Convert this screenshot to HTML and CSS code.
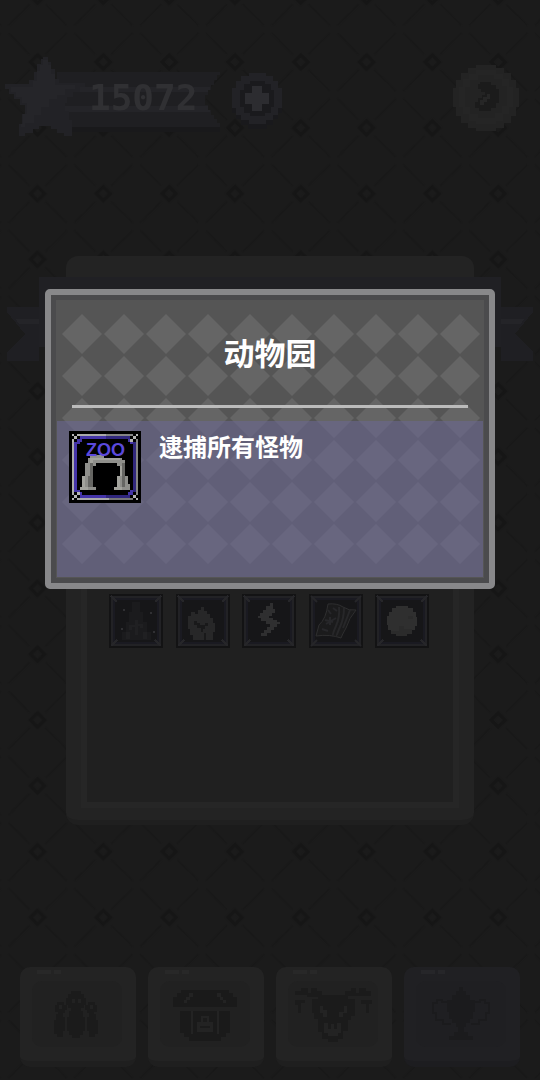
FILE: index.html
```html
<!DOCTYPE html>
<html lang="zh-CN">
<head>
  <meta charset="UTF-8">
  <meta name="viewport" content="width=device-width, initial-scale=1.0">
  <title>动物园</title>
  <link rel="stylesheet" href="styles.css">
</head>
<body>
  <svg class="wallpaper" aria-hidden="true">
    <defs>
      <pattern id="lattice" x="4.6" y="29.1" width="65.8" height="65.8" patternUnits="userSpaceOnUse">
        <path d="M4 4L25 25M41 41L62 62M62 4L41 25M25 41L4 62" stroke="#181818" stroke-width="1.5"/>
        <path d="M33 26L40 33L33 40L26 33Z" fill="none" stroke="#161616" stroke-width="3.5"/>
      </pattern>
      <!-- frame shared by all the achievement icons -->
      <symbol id="frame" viewBox="0 0 27 27">
        <path fill="#131314" d="M0 0H27V27H0Z"/>
        <path fill="none" stroke="#222225" d="M1.5 1.5H25.5V25.5H1.5Z"/>
        <path fill="none" stroke="#1a1a21" d="M2.5 2.5H24.5V24.5H2.5Z"/>
        <path fill="#161618" d="M3 3H24V24H3Z"/>
        <path stroke="#262629" d="M1 1L4 4M26 1L23 4M1 26L4 23M26 26L23 23"/>
      </symbol>
    </defs>
    <rect width="100%" height="100%" fill="url(#lattice)"/>
  </svg>

  <div class="page">
    <header class="top-bar">
      <div class="score">
        <svg class="star" viewBox="0 0 80 80" shape-rendering="crispEdges" aria-hidden="true">
          <path fill="#222226" d="M38 0H43V5H46V12H50V22H54V26H80V30H75V35H68V40H62V46H60V54H64V63H67V79H59V76H52V72H46V69H34V72H28V76H20V79H14V67H17V57H20V48H15V42H9V37H4V32H0V27H24V23H29V15H32V7H36V2H38Z"/>
          <path fill="#252529" d="M38 3H43V8H46V17H50V28H70V32H60V38H52V42H44V50H36V58H29V66H20V70H16V67H18V57H22V46H17V40H11V35H6V30H28V24H32V14H35V8H38Z"/>
        </svg>
        <div class="score-ribbon">
          <svg class="score-shape" viewBox="0 0 163 62" preserveAspectRatio="none" shape-rendering="crispEdges" aria-hidden="true">
            <path fill="#1f1f22" d="M0 0H163V3H160V8H157V13H154V18H151V23H148V33H151V38H154V43H157V47H160V51H163V55H0Z"/>
            <path fill="#242428" d="M0 15H153V18H151V20H0ZM0 34H151V38H153V40H0Z"/>
            <path fill="#19191b" d="M0 55H163V60H0Z"/>
          </svg>
          <span class="score-value">15072</span>
        </div>
      </div>
      <button class="icon-button plus" aria-label="增加">
        <svg viewBox="0 0 50 58" shape-rendering="crispEdges">
          <path fill="#19191c" d="M17 6H34V9H41V14H46V19H50V40H46V46H41V52H35V56H16V52H9V46H4V40H0V19H4V13H9V9H17Z"/>
          <path fill="#222226" d="M17 0H34V3H41V8H46V15H50V35H46V42H41V47H34V51H17V47H9V42H4V35H0V15H4V8H9V3H17Z"/>
          <path fill="#1a1a1d" d="M18 8H33V11H39V17H42V34H39V40H33V43H18V40H12V34H8V17H12V11H18Z"/>
          <path fill="#2c2c30" d="M20 13H30V20H37V31H30V38H20V31H13V20H20Z"/>
        </svg>
      </button>
      <button class="icon-button forward" aria-label="前进">
        <svg viewBox="0 0 66 66" shape-rendering="crispEdges">
          <path fill="#232323" d="M23 0H43V3H51V8H58V15H63V23H66V42H63V51H58V58H51V63H43V66H23V63H15V58H8V51H3V42H0V23H3V15H8V8H15V3H23Z"/>
          <path fill="#252525" d="M23 5H43V9H50V14H56V22H60V42H56V49H50V56H43V59H23V56H16V49H10V42H6V22H10V14H16V9H23Z"/>
          <path fill="#232323" d="M25 10H41V14H49V21H54V41H49V48H42V53H25V49H17V42H12V22H17V15H25Z"/>
          <path fill="#1b1b1b" d="M27 17H38V20H43V24H46V38H43V43H38V46H26V43H22V37H25V33H29V30H32V27H28V24H25V19H27Z"/>
          <path fill="#262626" d="M34 29H37V34H34V37H31V40H27V35H30V32H34Z"/>
        </svg>
      </button>
    </header>

    <main class="panel">
      <div class="banner">
        <svg class="tail" viewBox="0 0 32 54" shape-rendering="crispEdges" aria-hidden="true">
          <path fill="#1f1f23" d="M0 0H32V54H0V45L18 27L0 5Z"/>
          <path fill="#242428" d="M9 12H32V17H12Z"/>
        </svg>
        <div class="banner-middle"></div>
        <svg class="tail" viewBox="0 0 32 54" shape-rendering="crispEdges" aria-hidden="true">
          <path fill="#1f1f23" d="M32 0H0V54H32V45L14 27L32 5Z"/>
          <path fill="#242428" d="M23 12H0V17H20Z"/>
        </svg>
      </div>
      <div class="panel-body">
        <div class="badges">
          <svg class="badge" viewBox="0 0 54 54" shape-rendering="crispEdges" aria-hidden="true">
            <use href="#frame"/>
            <path fill="#1b1b1d" d="M23 8H31V18H34V28H38V38H42V46H13V38H17V28H20V18H23Z"/>
            <path fill="#202022" d="M26 26H29V30H34V34H31V32H29V41H26V33H23V36H20V31H26ZM17 38H21V45H17ZM34 38H38V45H34Z"/>
            <path fill="#303033" d="M14 15H16V17H14ZM41 18H43V20H41ZM12 34H14V36H12ZM44 37H46V39H44Z"/>
          </svg>
          <svg class="badge" viewBox="0 0 54 54" shape-rendering="crispEdges" aria-hidden="true">
            <use href="#frame"/>
            <path fill="#272728" d="M25 13H28V17H31V20H34V24H37V29H39V38H37V46H17V41H14V35H12V22H15V18H19V20H22V16H25Z"/>
            <path fill="#19191a" d="M18 27H21V29H24V31H29V29H32V32H29V35H27V38H25V34H21V31H18ZM28 39H30V46H28Z"/>
          </svg>
          <svg class="badge" viewBox="0 0 54 54" shape-rendering="crispEdges" aria-hidden="true">
            <use href="#frame"/>
            <path fill="#2f2f30" d="M28 9H31V15H33V19H30V22H27V24H31V26H35V28H38V30H35V33H32V36H29V39H25V42H19V39H22V36H25V33H28V30H24V27H19V24H16V22H18V19H21V16H24V12H28Z"/>
          </svg>
          <svg class="badge" viewBox="0 0 54 54" aria-hidden="true">
            <use href="#frame"/>
            <path fill="#1b1b1c" stroke="#2e2e2f" d="M19 10Q28 9 34 13T47 16Q40 24 37 34Q33 41 32 44Q21 40 7 42L10 31Q17 25 19 10Z"/>
            <path fill="none" stroke="#272729" stroke-width="2" d="M30 13Q31 23 27 32T24 42M35 14Q35 24 31 33T28 42M41 16Q38 24 34 34"/>
            <path fill="none" stroke="#27272a" stroke-width="2" d="M19 16L22 20M24 14L28 17M16 26L24 28M21 23V31M13 35L19 37M17 30L27 24"/>
          </svg>
          <svg class="badge" viewBox="0 0 54 54" shape-rendering="crispEdges" aria-hidden="true">
            <use href="#frame"/>
            <path fill="#2f2f2f" d="M21 12H33V14H38V18H41V23H42V32H40V36H37V40H32V42H21V40H16V36H13V31H12V22H14V18H17V14H21Z"/>
            <path fill="#2b2b2b" d="M24 32H29V35H37V40H32V42H21V40H16V37H24ZM33 22H38V25H33Z"/>
          </svg>
        </div>
      </div>
    </main>

    <nav class="tabs">
      <button class="tab" aria-label="角色">
        <svg viewBox="0 0 80 60" shape-rendering="crispEdges">
          <path fill="#1b1b1b" d="M34 6H44V9H47V13H49V20H47V23H44V26H46V31H48V45H46V49H43V52H35V49H32V45H30V31H32V26H34V23H31V20H29V13H31V9H34Z"/>
          <path fill="#1b1b1b" d="M20 17H27V20H30V25H28V28H26V31H28V45H26V51H20V48H17V34H19V29H21V27H18V20H20ZM51 17H58V20H60V27H57V29H59V34H61V48H58V51H52V45H50V31H52V28H50V25H48V20H51Z"/>
          <path fill="#222222" d="M35 14H38V18H35ZM41 14H44V18H41ZM22 20H25V24H22ZM53 20H56V24H53Z"/>
        </svg>
      </button>
      <button class="tab" aria-label="商店">
        <svg viewBox="0 0 80 60" shape-rendering="crispEdges">
          <path fill="#1a1a1a" d="M16 5H64V8H68V12H71V22H9V12H12V8H16ZM15 26H65V47H61V51H56V55H24V51H19V47H15Z"/>
          <path fill="#232323" d="M24 8H28V12H25V15H22V18H19V15H21V12H24ZM52 8H56V12H58V15H61V18H58V15H55V12H52ZM26 26H28V48H26ZM52 26H54V48H52ZM36 30H44V36H48V46H32V36H36Z"/>
          <path fill="#1b1b1b" d="M38 32H42V36H38ZM35 40H45V42H35Z"/>
        </svg>
      </button>
      <button class="tab" aria-label="怪物">
        <svg viewBox="0 0 80 60" shape-rendering="crispEdges">
          <path fill="#1b1b1b" d="M3 6H9V3H15V8H18V3H24V6H29V12H14V10H3ZM52 6H58V3H63V8H66V3H72V6H77V11H52ZM3 15H12V18H9V28H6V20H3ZM68 15H78V19H75V28H72V19H68ZM19 14H25V10H55V14H62V30H58V34H55V45H50V53H45V56H35V53H29V46H25V33H21V28H19Z"/>
          <path fill="#232323" d="M27 21H30V25H34V31H30V28H27ZM51 21H54V28H50V31H46V27H51ZM31 37H35V43H38V38H41V43H44V37H48V47H45V50H35V47H31Z"/>
        </svg>
      </button>
      <button class="tab tab-active" aria-label="成就">
        <svg viewBox="0 0 80 60" shape-rendering="crispEdges">
          <path fill="#1b1b1d" d="M38 2H42V6H45V10H49V15H54V27H52V33H49V37H45V41H43V46H47V50H52V54H28V50H33V46H37V41H35V37H31V33H28V27H26V15H31V10H35V6H38Z"/>
          <path fill="none" stroke="#1b1b1d" stroke-width="2" d="M26 17H21V15H16V18H12V28H15V34H22V38H30M54 17H59V15H64V18H68V28H65V34H58V38H50"/>
        </svg>
      </button>
    </nav>
  </div>

  <div class="overlay">
    <section class="dialog" role="dialog" aria-labelledby="dialog-title">
      <svg class="diamonds" aria-hidden="true">
        <defs>
          <pattern id="diamond" width="42" height="42" patternUnits="userSpaceOnUse">
            <path fill="#656565" d="M20 0L40 20L20 40L0 20Z"/>
          </pattern>
        </defs>
        <rect width="100%" height="100%" fill="url(#diamond)"/>
      </svg>
      <h1 class="dialog-title" id="dialog-title">动物园</h1>
      <div class="dialog-content">
        <svg class="zoo" viewBox="0 0 72 72" role="img" aria-label="ZOO">
          <svg viewBox="0 0 27 27" width="72" height="72" shape-rendering="crispEdges">
            <path fill="#000" d="M0 0H27V27H0Z"/>
            <path fill="#aaa" d="M1 1H14V2H2V26H1Z"/>
            <path fill="#858585" d="M14 1H26V26H25V2H14Z"/>
            <path fill="#aaa" d="M1 25H15V26H1Z"/>
            <path fill="#777" d="M15 25H26V26H15Z"/>
            <path fill="#4434a8" d="M4 2H14V3H4ZM2 4H3V23H2ZM4 24H14V25H4Z"/>
            <path fill="#30277d" d="M14 2H23V3H14ZM24 4H25V23H24ZM14 24H23V25H14Z"/>
            <path fill="#4434a8" d="M3 3H5V4H4V5H3ZM22 3H24V5H23V4H22ZM3 22H4V23H5V24H3ZM23 22H24V24H22V23H23Z"/>
            <path fill="#000" d="M1 2H2V3H1ZM2 1H3V2H2ZM24 1H25V2H24ZM25 2H26V3H25ZM1 24H2V25H1ZM2 25H3V26H2ZM24 25H25V26H24ZM25 24H26V25H25Z"/>
            <path fill="#b4b4b4" d="M1 1H2V2H1ZM2 2H3V3H2ZM3 1H4V2H3ZM1 3H2V4H1ZM25 1H26V2H25ZM24 2H25V3H24ZM23 3H24V4H23ZM1 25H2V26H1ZM2 24H3V25H2ZM3 23H4V24H3ZM24 24H25V25H24ZM25 25H26V26H25Z"/>
            <path fill="#8f8f8b" d="M7 10H8V9H13V10H20V11H21V17H22V20H23V22H17V21H18V17H19V13H18V12H10V13H9V21H10V22H4V21H5V17H6V12H7Z"/>
            <path fill="#a3a39d" d="M8 10H19V11H9V12H8ZM5 17H6V21H5ZM4 21H7V22H4ZM19 13H20V17H19ZM18 17H19V21H18ZM17 21H20V22H17Z"/>
            <path fill="#666663" d="M8 12H9V21H8ZM20 12H21V21H20ZM7 17H8V21H7Z"/>
          </svg>
          <text class="zoo-text" x="17" y="25">ZOO</text>
        </svg>
        <p class="description">逮捕所有怪物</p>
      </div>
    </section>
  </div>
</body>
</html>
```

FILE: styles.css
```css
* {
  box-sizing: border-box;
}
body {
  margin: 0;
  background-color: #1b1b1b;
  font-family: "Noto Sans CJK SC", sans-serif;
  color: #fff;
}
button {
  padding: 0;
  border: none;
  background: none;
  cursor: pointer;
}
svg {
  display: block;
}
.wallpaper {
  position: fixed;
  top: 0;
  left: 0;
  width: 100%;
  height: 100%;
}
.page {
  position: relative;
  min-height: 100vh;
  display: flex;
  flex-direction: column;
}

/* top bar */
.top-bar {
  display: flex;
  align-items: flex-start;
  padding: 57px 21px 0 5px;
}
.score {
  display: flex;
  align-items: flex-start;
}
.star {
  position: relative;
  z-index: 1;
  width: 80px;
  height: 80px;
}
.score-ribbon {
  display: grid;
  width: 163px;
  height: 62px;
  margin: 15px 0 0 -28px;
}
.score-shape,
.score-value {
  grid-area: 1 / 1;
}
.score-shape {
  width: 100%;
  height: 100%;
}
.score-value {
  padding-left: 32px;
  font-family: "DejaVu Sans Mono", monospace;
  font-size: 36px;
  font-weight: bold;
  line-height: 52px;
  color: #303033;
  z-index: 1;
}
.icon-button svg {
  width: 100%;
}
.plus {
  width: 50px;
  margin: 16px 0 0 12px;
}
.forward {
  width: 66px;
  margin: 8px 0 0 auto;
}

/* achievements panel */
.panel {
  min-height: 569px;
  margin: 119px 66px 40px;
  padding: 21px 15px 12px;
  display: flex;
  flex-direction: column;
  background-color: #232323;
  border-bottom: 5px solid #1f1f1f;
  border-radius: 12px;
}
.banner {
  display: flex;
  margin: 0 -74px;
}
.tail {
  width: 32px;
  height: 54px;
  margin-top: 30px;
}
.banner-middle {
  flex: 1;
  height: 70px;
  background-color: #202024;
}
.panel-body {
  flex: 1;
  padding: 233px 24px 20px 22px;
  background-color: #202020;
  border: 6px solid #262626;
  border-top: none;
}
.badges {
  display: flex;
  justify-content: space-between;
}
.badge {
  width: 54px;
  height: 54px;
}

/* bottom tabs */
.tabs {
  display: grid;
  grid-template-columns: repeat(4, 1fr);
  gap: 12px;
  margin-top: auto;
  padding: 0 20px 13px;
}
.tab {
  position: relative;
  height: 100px;
  padding: 14px 14px 14px 12px;
  background-color: #232323;
  border-bottom: 6px solid #1f1f1f;
  border-radius: 10px;
}
.tab::before {
  content: "";
  position: absolute;
  top: 3px;
  left: 17px;
  width: 24px;
  height: 4px;
  background: linear-gradient(to right, #282828 14px, transparent 14px, transparent 17px, #282828 17px);
}
.tab svg {
  width: 100%;
  height: 100%;
  padding: 4px 3px 1px;
  background-color: #212121;
  border-radius: 10px;
}
.tab-active {
  background-color: #202023;
  border-color: #1d1d20;
}
.tab-active svg {
  background-color: #1f1f22;
}
.tab-active::before {
  background: linear-gradient(to right, #262629 14px, transparent 14px, transparent 17px, #262629 17px);
}

/* dialog */
.overlay {
  position: fixed;
  top: 0;
  right: 0;
  bottom: 0;
  left: 0;
  z-index: 2;
  padding: 289px 45px 0;
}
.dialog {
  position: relative;
  min-height: 300px;
  padding: 0 6px 6px;
  display: flex;
  flex-direction: column;
  background-color: #555;
  border: 6px solid #88888a;
  border-radius: 5px;
  box-shadow: inset 0 0 0 5px #4b4b4d;
}
.diamonds {
  position: absolute;
  top: 19px;
  left: 11px;
  width: calc(100% - 20px);
  height: 252px;
}
.dialog-title {
  position: relative;
  margin: 0 15px 13px;
  padding: 33px 0 29px;
  border-bottom: 3px solid #bbb;
  text-align: center;
  font-size: 31px;
  font-weight: bold;
  line-height: 48px;
}
.dialog-content {
  position: relative;
  flex: 1;
  display: flex;
  gap: 18px;
  padding: 10px 12px;
  background-color: rgba(108, 104, 150, 0.55);
}
.zoo {
  width: 72px;
  height: 72px;
}
.zoo-text {
  font-family: "Liberation Sans", Arial, sans-serif;
  font-size: 18px;
  font-weight: bold;
  fill: #5b49dc;
}
.description {
  margin: 0;
  font-size: 24px;
  font-weight: bold;
  line-height: 30px;
}
```
